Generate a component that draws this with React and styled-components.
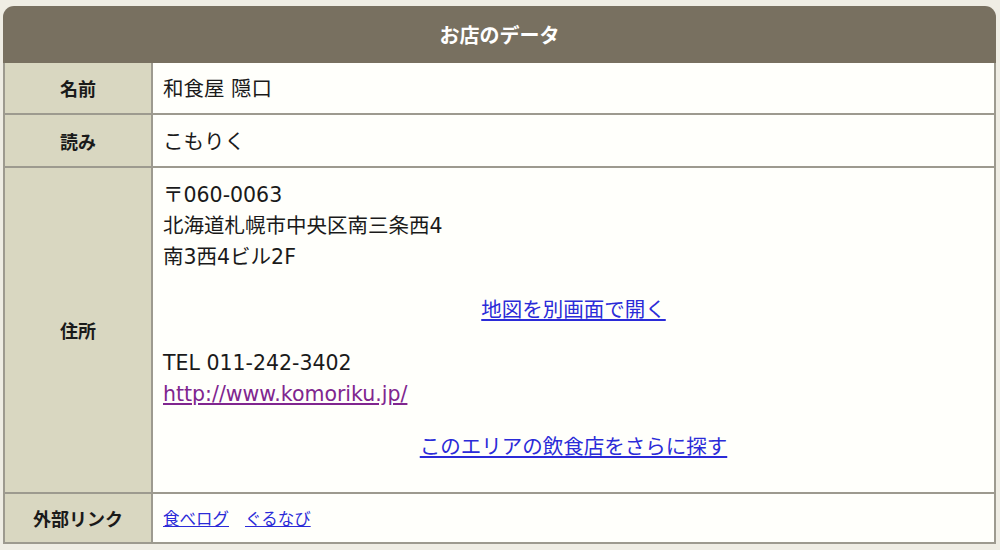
import React from 'react'
import styled, { createGlobalStyle } from 'styled-components'

const GlobalStyle = createGlobalStyle`
  body {
    margin:0;
    background:#efede4;
    font-family:"DejaVu Sans", "Noto Sans CJK JP", sans-serif;
    color:#1a1a1a;
  }
`

const Wrap = styled.div`
  padding:6px 4px 0 3px;
`

const Table = styled.table`
  width:993px;
  border-collapse:separate;
  border-spacing:0;
`

const Head = styled.th`
  height:57px;
  padding:0;
  background:#787060;
  color:#fff;
  font-size:20px;
  font-weight:bold;
  text-align:center;
  border-radius:11px 11px 0 0;
`

const Label = styled.th`
  width:146px;
  height:${props => props.h}px;
  padding:0;
  background:#d9d7c1;
  border-left:2px solid #9d9a8f;
  border-bottom:2px solid #9d9a8f;
  border-right:2px solid #9d9a8f;
  font-size:18px;
  font-weight:bold;
  text-align:center;
  vertical-align:middle;
`

const Cell = styled.td`
  background:#fffffb;
  border-right:2px solid #9d9a8f;
  border-bottom:2px solid #9d9a8f;
  padding:${props => props.pad || '3px 10px 0'};
  font-size:${props => props.size || 20.5}px;
  line-height:31px;
  vertical-align:${props => props.top ? 'top' : 'middle'};
`

const Line = styled.div`
  line-height:31px;
`

const Center = styled.div`
  text-align:center;
  margin-top:22px;
`

const Link = styled.a`
  color:${props => props.visited ? '#80268f' : '#2b2bd8'};
  text-decoration:underline;
  margin-right:${props => props.gap || 0}px;
`

const Block = styled.div`
  margin-top:22px;
`

export default function App(){
  return (
    <Wrap>
      <GlobalStyle />
      <Table>
        <thead>
          <tr><Head colSpan={2}>お店のデータ</Head></tr>
        </thead>
        <tbody>
          <tr>
            <Label h={50}>名前</Label>
            <Cell>和食屋 隠口</Cell>
          </tr>
          <tr>
            <Label h={51}>読み</Label>
            <Cell>こもりく</Cell>
          </tr>
          <tr>
            <Label h={323}>住所</Label>
            <Cell pad="12px 10px 29px" top>
              <Line>〒060-0063</Line>
              <Line>北海道札幌市中央区南三条西4</Line>
              <Line>南3西4ビル2F</Line>
              <Center><Link href="#">地図を別画面で開く</Link></Center>
              <Block>
                <Line>TEL 011-242-3402</Line>
                <Line><Link href="#" visited>http://www.komoriku.jp/</Link></Line>
              </Block>
              <Center><Link href="#">このエリアの飲食店をさらに探す</Link></Center>
            </Cell>
          </tr>
          <tr>
            <Label h={48}>外部リンク</Label>
            <Cell size={16.5}>
              <Link href="#" gap={16}>食べログ</Link>
              <Link href="#">ぐるなび</Link>
            </Cell>
          </tr>
        </tbody>
      </Table>
    </Wrap>
  )
}
